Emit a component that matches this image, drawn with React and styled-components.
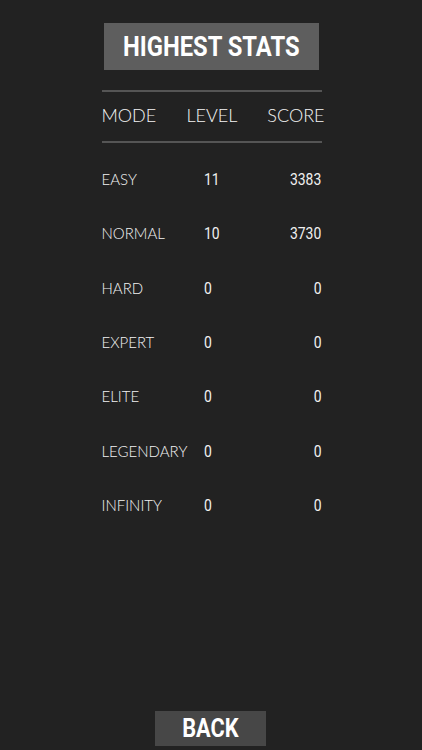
import React from "react";
import styled, { createGlobalStyle } from "styled-components";

const Global = createGlobalStyle`
  html, body { margin: 0; padding: 0; background: #222222; }
  * { box-sizing: border-box; }
`;

const Page = styled.div`
  width: 422px;
  height: 750px;
  background: #222222;
  display: flex;
  flex-direction: column;
  align-items: center;
  padding: 23px 0 4px;
  color: #f2f2f2;
`;

const TitleBox = styled.div`
  width: 215px;
  height: 47px;
  background: #5e5e5e;
  display: flex;
  align-items: center;
  justify-content: center;
  font-family: Roboto, "Liberation Sans", sans-serif;
  font-weight: 700;
  font-size: 27px;
  color: #ffffff;
`;

const Condensed = styled.span`
  display: inline-block;
  white-space: nowrap;
  transform: scaleX(${(p) => p.$s || 0.88});
  transform-origin: ${(p) => p.$origin || "center"};
`;

const Table = styled.div`
  width: 220px;
  margin-top: 20px;
  margin-left: 1px;
`;

const Rule = styled.div`
  height: 2px;
  background: #555555;
`;

const Grid = styled.div`
  display: grid;
  grid-template-columns: ${(p) => p.$cols};
  align-items: center;
  height: ${(p) => p.$h}px;
  padding-bottom: ${(p) => p.$pb || 0}px;
`;

const HeadCell = styled.div`
  font-family: Lato, "Open Sans", sans-serif;
  font-weight: 300;
  font-size: 18px;
  color: #f4f4f4;
  text-align: ${(p) => p.$align || "left"};
  white-space: nowrap;
  margin-right: ${(p) => p.$mr || 0}px;
`;

const Body = styled.div`
  padding-top: 9px;
`;

const ModeCell = styled.div`
  font-family: Lato, "Open Sans", sans-serif;
  font-weight: 300;
  font-size: 15px;
  color: #f2f2f2;
  white-space: nowrap;
`;

const NumCell = styled.div`
  font-family: Roboto, "Liberation Sans", sans-serif;
  font-size: 17px;
  color: #f0f0f0;
  text-align: ${(p) => p.$align || "left"};
`;

const Spacer = styled.div`
  flex: 1;
`;

const BackButton = styled.button`
  width: 111px;
  height: 35px;
  background: #474747;
  border: none;
  color: #ffffff;
  font-family: Roboto, "Liberation Sans", sans-serif;
  font-weight: 700;
  font-size: 25px;
  padding: 0;
  margin-right: 1px;
  display: flex;
  align-items: center;
  justify-content: center;
`;

const rows = [
  ["EASY", "11", "3383"],
  ["NORMAL", "10", "3730"],
  ["HARD", "0", "0"],
  ["EXPERT", "0", "0"],
  ["ELITE", "0", "0"],
  ["LEGENDARY", "0", "0"],
  ["INFINITY", "0", "0"],
];

export default function App() {
  return (
    <>
      <Global />
      <Page>
        <TitleBox>
          <Condensed $s={0.88}>HIGHEST STATS</Condensed>
        </TitleBox>
        <Table>
          <Rule />
          <Grid $h={49} $pb={3} $cols="85px 1fr 60px">
            <HeadCell>MODE</HeadCell>
            <HeadCell>LEVEL</HeadCell>
            <HeadCell $align="right" $mr={-3}>SCORE</HeadCell>
          </Grid>
          <Rule />
          <Body>
            {rows.map(([m, l, s]) => (
              <Grid key={m} $h={54.3} $cols="102px 1fr 60px">
                <ModeCell>{m}</ModeCell>
                <NumCell>
                  <Condensed $s={0.82} $origin="left">{l}</Condensed>
                </NumCell>
                <NumCell $align="right">
                  <Condensed $s={0.82} $origin="right">{s}</Condensed>
                </NumCell>
              </Grid>
            ))}
          </Body>
        </Table>
        <Spacer />
        <BackButton>
          <Condensed $s={0.87}>BACK</Condensed>
        </BackButton>
      </Page>
    </>
  );
}
